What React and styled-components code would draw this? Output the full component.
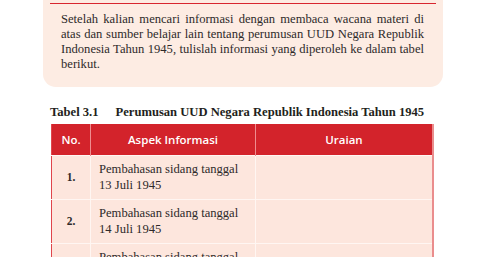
import React from "react";
import styled, { createGlobalStyle } from "styled-components";

const rows = [
  { no: "1.", aspek: ["Pembahasan sidang tanggal", "13 Juli 1945"] },
  { no: "2.", aspek: ["Pembahasan sidang tanggal", "14 Juli 1945"] },
  { no: "3.", aspek: ["Pembahasan sidang tanggal", "15 Juli 1945"] },
];

const App = () => {
  return (
    <>
      <GlobalStyle />
      <Page>
        <InfoBox>
          <BoxHeading>Ayo Mencari Informasi</BoxHeading>
          <BoxText>
            Setelah kalian mencari informasi dengan membaca wacana materi di
            atas dan sumber belajar lain tentang perumusan UUD Negara Republik
            Indonesia Tahun 1945, tulislah informasi yang diperoleh ke dalam
            tabel berikut.
          </BoxText>
        </InfoBox>

        <Caption>
          <CaptionLabel>Tabel 3.1</CaptionLabel>
          Perumusan UUD Negara Republik Indonesia Tahun 1945
        </Caption>

        <Table>
          <thead>
            <tr>
              <Th width={38}>No.</Th>
              <Th width={164}>Aspek Informasi</Th>
              <Th>Uraian</Th>
            </tr>
          </thead>
          <tbody>
            {rows.map((row) => (
              <tr key={row.no}>
                <NumCell>{row.no}</NumCell>
                <Td>
                  {row.aspek[0]}
                  <br />
                  {row.aspek[1]}
                </Td>
                <Td />
              </tr>
            ))}
          </tbody>
        </Table>
      </Page>
    </>
  );
};

const GlobalStyle = createGlobalStyle`
  html, body {
    margin: 0;
    padding: 0;
    background: #ffffff;
    overflow: hidden;
  }
`;

const Page = styled.div`
  margin-top: -16px;
  padding-left: 43px;
  width: 400px;
  font-family: "Liberation Serif", "DejaVu Serif", serif;
  color: #2e2a2a;
`;

const InfoBox = styled.div`
  background: #fdece3;
  border-radius: 0 0 13px 13px;
  padding: 0 19px 15px 18px;
`;

const BoxHeading = styled.div`
  height: 19px;
  margin: 0 -12px 0 -11px;
  border-bottom: 1.5px solid #d8262f;
  font-size: 13px;
  font-weight: bold;
  color: #d8262f;
`;

const BoxText = styled.p`
  margin: 8px 0 0;
  font-size: 12.6px;
  line-height: 15px;
  text-align: justify;
`;

const Caption = styled.div`
  margin: 18px 0 0 7px;
  font-size: 12.6px;
  font-weight: bold;
  color: #231f20;
  line-height: 14px;
  white-space: nowrap;
`;

const CaptionLabel = styled.span`
  margin-right: 17px;
`;

const Table = styled.table`
  margin: 5px 0 0 8px;
  width: 383px;
  border-collapse: collapse;
  border-left: 1px solid #e0454c;
  border-right: 2px solid #ea8d8d;
`;

const Th = styled.th`
  width: ${(p) => (p.width ? `${p.width}px` : "auto")};
  height: 31px;
  padding: 0;
  background: #d3232b;
  color: #ffffff;
  font-family: "Open Sans", "Liberation Sans", sans-serif;
  font-size: 11.5px;
  font-weight: 600;
  text-align: center;
  border-left: 1px solid #ef8c8f;

  &:first-child {
    border-left: none;
  }
`;

const Td = styled.td`
  height: 44px;
  box-sizing: border-box;
  padding: 0 0 0 8px;
  background: #fde6dd;
  font-size: 12.6px;
  line-height: 15.5px;
  vertical-align: middle;
  white-space: nowrap;
  border-top: 1px solid #fff6f2;
  border-left: 1px solid #fff6f2;
`;

const NumCell = styled(Td)`
  padding: 0;
  text-align: center;
  font-weight: bold;
  font-size: 11.5px;
  border-left: none;
`;

export default App;
